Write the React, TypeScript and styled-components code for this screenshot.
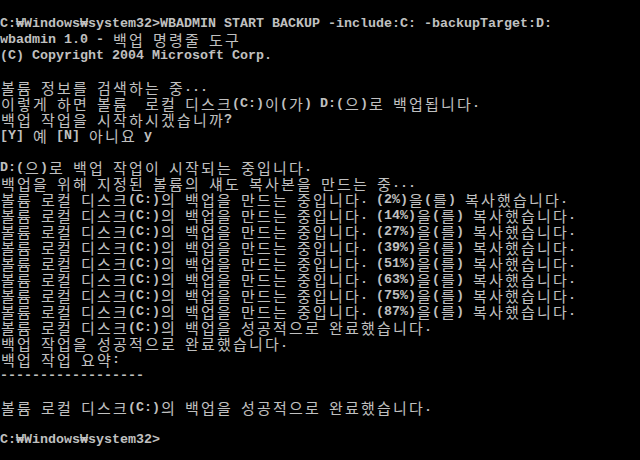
import React from "react";
import styled, { createGlobalStyle } from "styled-components";

const GlobalStyle = createGlobalStyle`
  html, body {
    margin: 0;
    padding: 0;
    background: #000000;
  }
`;

const Console = styled.div`
  width: 640px;
  height: 460px;
  box-sizing: border-box;
  padding-top: 16px;
  background: #000000;
  color: #c0c0c0;
  overflow: hidden;
  font-family: "Liberation Mono", "DejaVu Sans Mono", monospace;
  font-size: 13.33px;
  font-weight: 700;
`;

const Line = styled.div`
  height: 16px;
  line-height: 16px;
  white-space: pre;
`;

// 한글은 콘솔 래스터 글꼴처럼 두 칸(16px) 폭으로 고정
const Wide = styled.span`
  display: inline-block;
  width: 16px;
  text-align: center;
  font-family: "Noto Sans CJK KR", "Noto Sans CJK SC", sans-serif;
  font-size: 15px;
  font-weight: 400;
  vertical-align: top;
`;

const HANGUL = /[\uAC00-\uD7A3]/;

const PROMPT = "C:\u20A9Windows\u20A9system32>";

const LINES = [
  `${PROMPT}WBADMIN START BACKUP -include:C: -backupTarget:D:`,
  "wbadmin 1.0 - 백업 명령줄 도구",
  "(C) Copyright 2004 Microsoft Corp.",
  "",
  "볼륨 정보를 검색하는 중...",
  "이렇게 하면 볼륨  로컬 디스크(C:)이(가) D:(으)로 백업됩니다.",
  "백업 작업을 시작하시겠습니까?",
  "[Y] 예 [N] 아니요 y",
  "",
  "D:(으)로 백업 작업이 시작되는 중입니다.",
  "백업을 위해 지정된 볼륨의 섀도 복사본을 만드는 중...",
  ...[2, 14, 27, 39, 51, 63, 75, 87].map(
    (p) => `볼륨 로컬 디스크(C:)의 백업을 만드는 중입니다. (${p}%)을(를) 복사했습니다.`
  ),
  "볼륨 로컬 디스크(C:)의 백업을 성공적으로 완료했습니다.",
  "백업 작업을 성공적으로 완료했습니다.",
  "백업 작업 요약:",
  "-".repeat(18),
  "",
  "볼륨 로컬 디스크(C:)의 백업을 성공적으로 완료했습니다.",
  "",
  PROMPT,
];

const renderText = (text: string) => {
  const parts: React.ReactNode[] = [];
  let ascii = "";

  Array.from(text).forEach((ch, i) => {
    if (HANGUL.test(ch)) {
      if (ascii) {
        parts.push(ascii);
        ascii = "";
      }
      parts.push(<Wide key={i}>{ch}</Wide>);
    } else {
      ascii += ch;
    }
  });

  if (ascii) parts.push(ascii);
  return parts;
};

export default function App() {
  return (
    <>
      <GlobalStyle />
      <Console>
        {LINES.map((text, i) => (
          <Line key={i}>{renderText(text)}</Line>
        ))}
      </Console>
    </>
  );
}
